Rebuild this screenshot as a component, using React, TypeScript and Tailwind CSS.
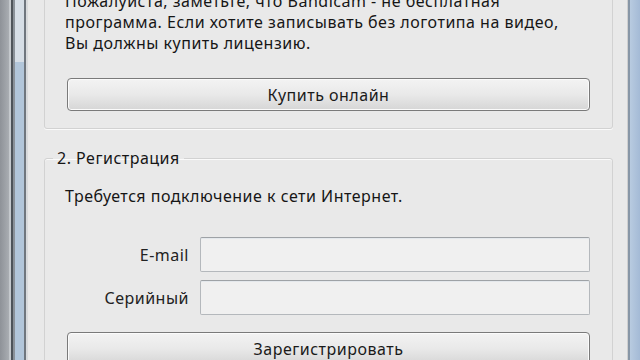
import React from 'react'

const font = { fontFamily: '"Noto Sans", "Open Sans", sans-serif' }

function WinButton({ label }: { label: string }) {
  return (
    <button
      className="h-[33px] w-full rounded-[4px] border border-[#7a7a7a] bg-gradient-to-b from-[#f3f3f3] via-[#e9e9e9] to-[#d6d6d6] text-[16px] tracking-[0.5px] text-[#1a1a1a] shadow-[inset_0_0_0_1px_#fbfbfb]"
    >
      {label}
    </button>
  )
}

function Field({ label }: { label: string }) {
  return (
    <div className="flex items-center">
      <span className="w-[122px] pr-[11px] text-right text-[16px] tracking-[0.5px] text-[#222]">{label}</span>
      <div className="h-[35px] flex-1 rounded-[2px] border border-[#b4b8bc] border-t-[#9ea2a6] bg-[#f0f0f0] shadow-[inset_0_1px_0_#e4e8ec]" />
    </div>
  )
}

export default function App() {
  return (
    <div className="flex h-[360px] w-[640px] overflow-hidden bg-[#e9e9e9]" style={font}>
      {/* left window frame */}
      <div className="flex h-full shrink-0">
        <div className="w-[9px] bg-gradient-to-r from-[#8e9298] to-[#a9adb2]" />
        <div className="w-[2px] bg-[#c4c8cc]" />
        <div className="w-[2px] bg-[#4e545a]" />
        <div className="w-[2px] bg-[#8a9198]" />
        <div className="flex w-[9px] flex-col">
          <div className="h-[62px] bg-[#d6dee6]" />
          <div className="flex-1 bg-[#b2c6da]" />
        </div>
        <div className="w-[2px] bg-[#6f767e]" />
        <div className="w-[2px] bg-[#d8dadc]" />
      </div>

      {/* client area */}
      <div className="flex min-w-0 flex-1 flex-col bg-[#e9e9e9] pl-[16px] pr-[14px] text-[#161616]">
        <fieldset className="-mt-[12px] rounded-[3px] border border-[#d2d2d2] px-[20px] pb-[17px] pt-[2px] shadow-[0_1px_0_#fafafa,inset_0_1px_0_#fafafa]">
          <p className="text-[16px] leading-[21px] tracking-[0.5px]">
            Пожалуйста, заметьте, что Bandicam - не бесплатная
            <br />
            программа. Если хотите записывать без логотипа на видео,
            <br />
            Вы должны купить лицензию.
          </p>
          <div className="mt-[24px] pl-[2px] pr-[2px]">
            <WinButton label="Купить онлайн" />
          </div>
        </fieldset>

        <fieldset className="mt-[19px] rounded-[3px] border border-[#d2d2d2] px-[20px] pb-[20px] shadow-[inset_0_1px_0_#fafafa]">
          <legend className="-ml-[12px] px-[4px] text-[16px] leading-[20px] tracking-[0.5px] text-[#161616]">2. Регистрация</legend>
          <p className="mt-[18px] text-[16px] leading-[21px] tracking-[0.5px]">Требуется подключение к сети Интернет.</p>
          <div className="mt-[30px] flex flex-col gap-[8px] pl-[13px] pr-[2px]">
            <Field label="E-mail" />
            <Field label="Серийный" />
          </div>
          <div className="mt-[17px] pl-[2px] pr-[2px]">
            <WinButton label="Зарегистрировать" />
          </div>
        </fieldset>
      </div>

      {/* right window frame */}
      <div className="flex h-full shrink-0">
        <div className="w-[1px] bg-[#cfcfcf]" />
        <div className="w-[2px] bg-[#8796a6]" />
        <div className="w-[10px] bg-gradient-to-r from-[#b8cbe0] to-[#a4bad6]" />
      </div>
    </div>
  )
}
